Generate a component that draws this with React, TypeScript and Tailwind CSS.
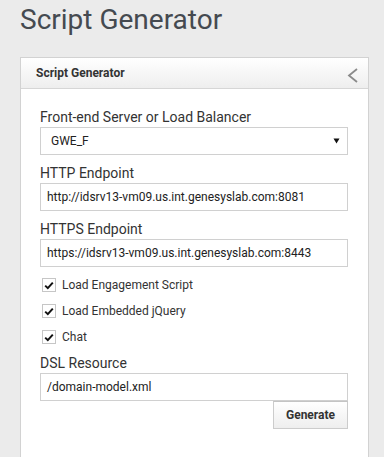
import React from "react";

function Label({ children, className = "" }: { children: React.ReactNode; className?: string }) {
  return (
    <div className={`text-[14px] leading-[19px] text-[#333333] ${className}`}>{children}</div>
  );
}

function TextBox({ value }: { value: string }) {
  return (
    <div className="h-[28px] border border-[#d0d0d0] bg-white pl-[6px] flex items-center text-[12px] text-[#222222]">
      {value}
    </div>
  );
}

function Check({ label }: { label: string }) {
  return (
    <div className="flex items-center h-[20px]">
      <div className="w-[14px] h-[14px] border border-[#c6c6c6] bg-white flex items-center justify-center ml-[2px]">
        <svg width="10" height="9" viewBox="0 0 10 9">
          <path d="M1.2 4.6 L3.8 7.1 L8.8 1.6" fill="none" stroke="#111111" strokeWidth="2" />
        </svg>
      </div>
      <span className="ml-[6px] text-[12px] text-[#333333]">{label}</span>
    </div>
  );
}

export default function App() {
  return (
    <div className="w-[384px] h-[457px] bg-[#ebebeb] overflow-hidden pl-[20px] [font-family:Roboto,'Liberation_Sans',sans-serif]">
      <h1 className="text-[28px] leading-[34px] pt-[3px] text-[#454a50] font-normal">
        Script Generator
      </h1>
      <div className="mt-[20px] w-[349px] h-[420px] border border-[#d2d2d2] bg-white">
        <div className="h-[31px] border-b border-[#d6d6d6] bg-gradient-to-b from-white to-[#eeeeee] flex items-center justify-between pl-[15px] pr-[10px]">
          <span className="text-[12px] font-bold text-[#333333]">Script Generator</span>
          <svg width="11" height="15" viewBox="0 0 11 15" className="mt-[4px]">
            <path d="M10 1 L2 7.5 L10 14" fill="none" stroke="#8a8a8a" strokeWidth="1.8" />
          </svg>
        </div>
        <div className="pl-[19px] pr-[20px] pt-[19px] flex flex-col">
          <Label>Front-end Server or Load Balancer</Label>
          <div className="h-[28px] border border-[#d0d0d0] bg-white pl-[10px] pr-[7px] flex items-center justify-between text-[12px] text-[#222222]">
            <span>GWE_F</span>
            <svg width="7" height="6" viewBox="0 0 7 6">
              <path d="M0.5 0.5 L6.5 0.5 L3.5 5.5 Z" fill="#111111" />
            </svg>
          </div>
          <Label className="mt-[9px]">HTTP Endpoint</Label>
          <TextBox value="http://idsrv13-vm09.us.int.genesyslab.com:8081" />
          <Label className="mt-[9px]">HTTPS Endpoint</Label>
          <TextBox value="https://idsrv13-vm09.us.int.genesyslab.com:8443" />
          <div className="mt-[8px] flex flex-col gap-[6px]">
            <Check label="Load Engagement Script" />
            <Check label="Load Embedded jQuery" />
            <Check label="Chat" />
          </div>
          <Label className="mt-[7px]">DSL Resource</Label>
          <TextBox value="/domain-model.xml" />
          <div className="flex justify-end">
            <button className="w-[75px] h-[28px] border border-[#cccccc] border-t-[#c4c4c4] bg-gradient-to-b from-white to-[#eeeeee] text-[12px] font-bold text-[#333333]">
              Generate
            </button>
          </div>
        </div>
      </div>
    </div>
  );
}
